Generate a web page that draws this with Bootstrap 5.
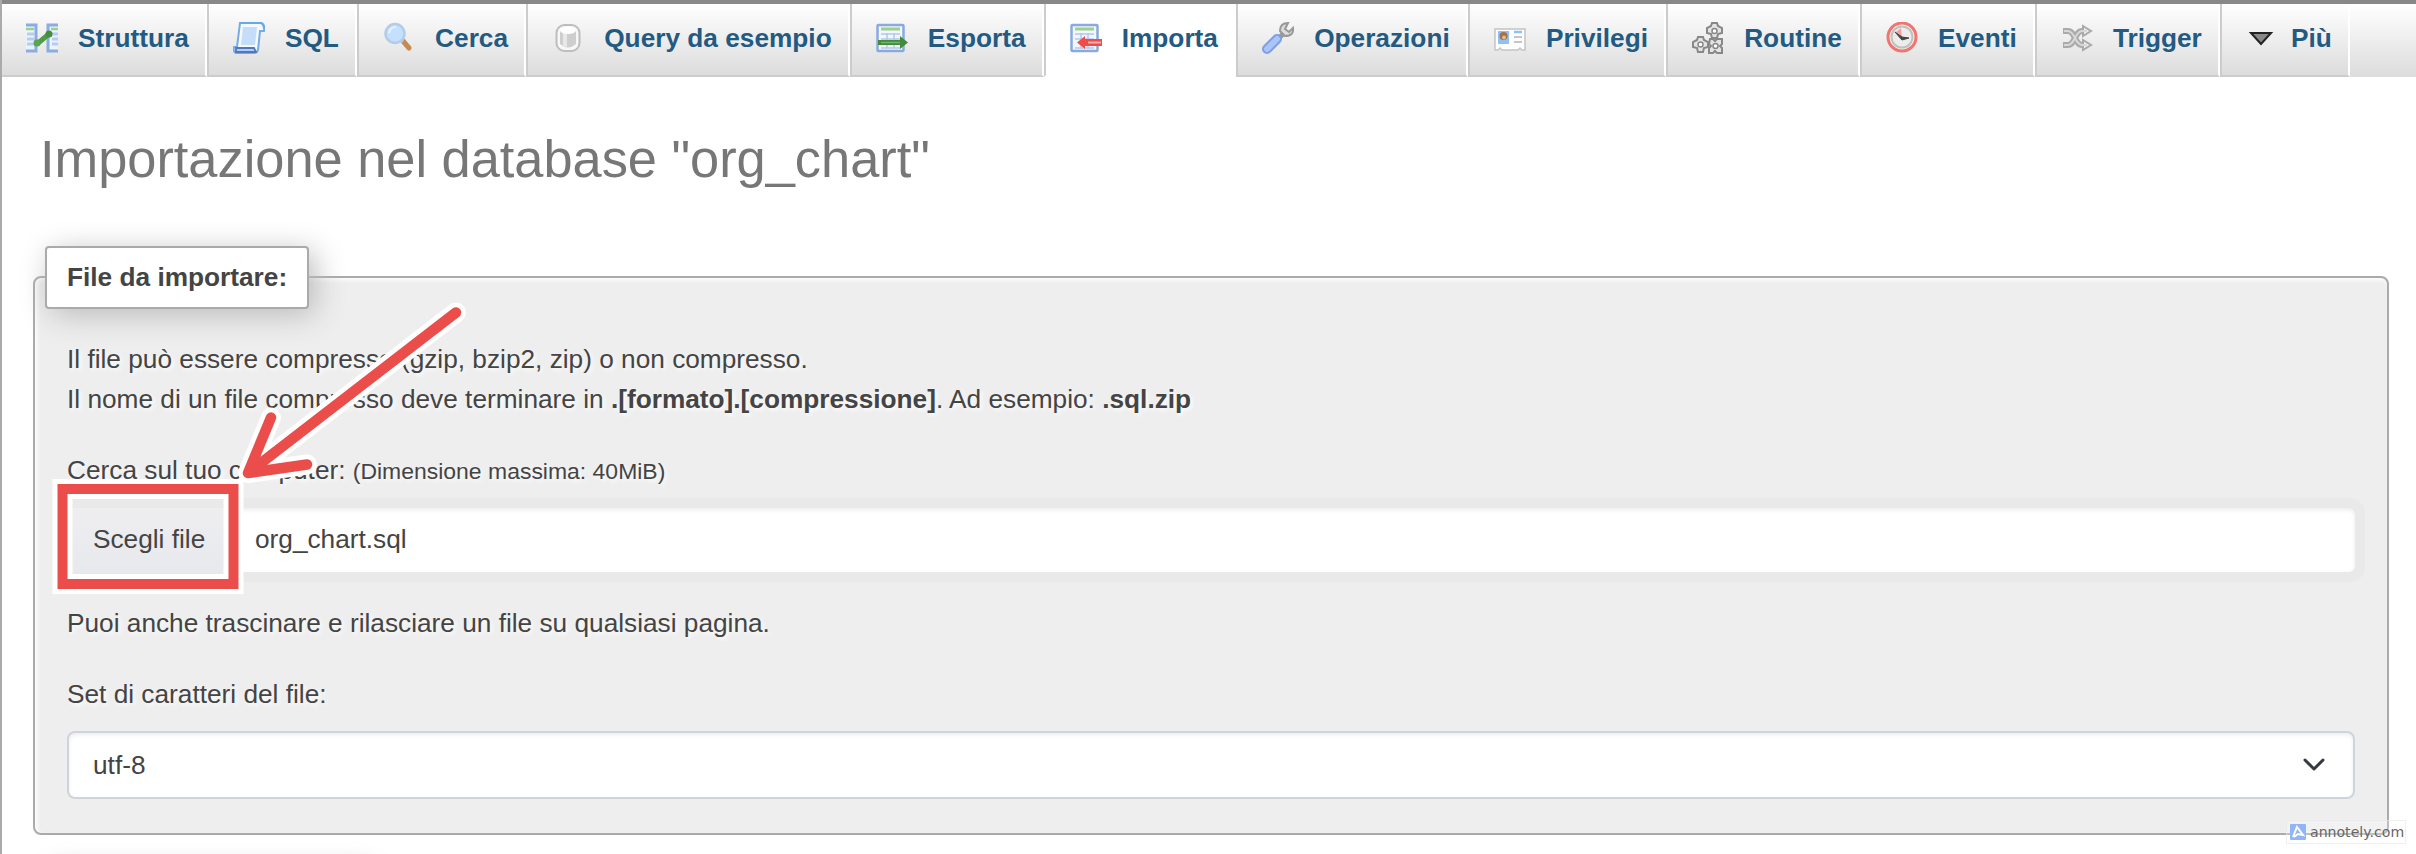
<!DOCTYPE html>
<html lang="it">
<head>
<meta charset="utf-8">
<title>Importa - org_chart</title>
<link href="https://cdn.jsdelivr.net/npm/bootstrap@5.3.0/dist/css/bootstrap.min.css" rel="stylesheet">
<style>
body{font-family:"Liberation Sans",Arial,sans-serif;font-size:26.24px;line-height:39.5px;color:#444;background:#fff}
.page{height:854px;border-left:2px solid #aaa}
.topmenu{margin-left:-2px;border-top:4px solid #888;height:77px;background:linear-gradient(#fff,#dcdcdc);flex-wrap:nowrap}
.topmenu .nav-link{height:73px;display:flex;align-items:center;padding:0 16.2px 3px 24px;border:0 solid;border-width:0 2px 2px;border-color:#ccc #fff #ccc #ccc;border-radius:0;font-weight:700;color:#235a81;white-space:nowrap;line-height:40px;background:linear-gradient(#fff,#dcdcdc)}
.topmenu .nav-item:first-child .nav-link{border-left-color:#aaa}
.topmenu .nav-link.active{background:#fff;border-color:#ccc #fff #fff #ccc}
.topmenu svg{width:32px;height:32px;margin:0 20px 0 0;flex:none}
.topmenu .nav-item:last-child svg{margin:0 14px 0 -1px}
.heading{font-size:52.4px;line-height:64px;color:#777;margin:50px 0 0 38px;font-weight:400;letter-spacing:-.02px}
.panel{margin:85px 27px 0 31px;height:559px;border:2px solid #aaa;border-radius:8px;background:#eee;box-shadow:inset 2px 2px 4px #fff;padding:0 32px;text-shadow:2px 2px 4px #fff}
.panel-legend{width:264px;height:63px;margin:-32px 0 31px -22px;border:2px solid #aaa;border-radius:4px;background:#fff;padding-left:20px;line-height:58px;font-weight:700;box-shadow:6px 6px 30px #bbb}
.filebox{height:64px;background:#fff;border-radius:6px;box-shadow:0 0 0 10px #e9e9e9,inset 0 2px 4px rgba(0,0,0,.08);text-shadow:none;line-height:62px}
.filebtn{width:162px;padding-left:26px;background:linear-gradient(#eeeef0,#e8e9ee);border-radius:6px 0 0 6px}
.filename{padding-left:26px}
.hint{margin:32px 0}
.charset{height:68px;border:2px solid #ced4da;border-radius:8px;background:#fff;padding:0 27px 0 24px;box-shadow:inset 0 2px 4px rgba(0,0,0,.075);text-shadow:none;line-height:40px}
.small-note{font-size:22.96px}
.callout{left:0;top:0;pointer-events:none}
.nextbox{width:318px;height:64px;left:45px;top:867px;box-shadow:6px 6px 30px #bbb}
.mark-credit{left:2286px;top:820px;width:120px;height:24px;background:rgba(255,255,255,.25);border:1px solid rgba(230,230,230,.6);font:14.1px/22px "DejaVu Sans",sans-serif;color:#666;padding-left:3px}
</style>
</head>
<body>
<div class="page position-relative overflow-hidden">
<ul class="nav topmenu">
<li class="nav-item"><a class="nav-link" href="#"><svg viewBox="0 0 32 32"><path d="M0 3h10v26H0M32 3H22v26h10" fill="#edf3fc" stroke="#8aace0" stroke-width="3"/><path d="M0 7h8M25 7h7" stroke="#9bd28b" stroke-width="2.5"/><path d="M1 12h7M1 17h7M1 22h7M26 12h6M26 17h6M26 22h6" stroke="#b5cdf0" stroke-width="3"/><path d="M11 22L23 12" stroke="#4f9c46" stroke-width="5"/><circle cx="11" cy="21" r="3.5" fill="#58a64e"/><circle cx="23" cy="12" r="3.5" fill="#458e3d"/></svg>Struttura</a></li>
<li class="nav-item"><a class="nav-link" href="#"><svg viewBox="0 0 32 32"><path d="M7 1h21q4 1 3 8h-4l-2 19q-1 3-4 3H3q-3-1-2-6h3Z" fill="#f5f9ff" stroke="#75ace7" stroke-width="2"/><path d="M10 5h14l-2 18H8Z" fill="#c4defa"/><path d="M3 26h18l2 4H3Z" fill="#b0cdf5" stroke="#5278b9" stroke-width="1.8"/><path d="M7 1h21q3 1 3 6" fill="none" stroke="#63abe6" stroke-width="2"/></svg>SQL</a></li>
<li class="nav-item"><a class="nav-link" href="#"><svg viewBox="0 0 32 32"><path d="M20 19l6 7" stroke="#c48a52" stroke-width="5" stroke-linecap="round"/><path d="M17 17l3 3" stroke="#bbb" stroke-width="3"/><circle cx="12" cy="11.500" r="9.500" fill="#c5e0fc" stroke="#b4cbea" stroke-width="2.500"/><path d="M6 11q1-6 7-6" fill="none" stroke="#e6f3ff" stroke-width="2"/></svg>Cerca</a></li>
<li class="nav-item"><a class="nav-link" href="#"><svg viewBox="0 0 32 32"><rect x="4.500" y="3" width="23" height="26" rx="8" fill="#f7f7f7" stroke="#bdbdbd" stroke-width="2"/><path d="M8 9v13q8 7 16 0V9Z" fill="#cecece"/><path d="M11 11v13q2 1 4 1V11Z" fill="#e8e8e8"/><ellipse cx="16" cy="8.500" rx="8" ry="3.500" fill="#fff"/></svg>Query da esempio</a></li>
<li class="nav-item"><a class="nav-link" href="#"><svg viewBox="0 0 32 32"><rect x="1.500" y="3" width="26" height="26" rx="1" fill="#f2f6fd" stroke="#89aadd" stroke-width="2.500"/><path d="M5 7h19" stroke="#9bd28b" stroke-width="3"/><path d="M5 12h19M5 17h19M5 26h19M11 11v15M18 11v15" stroke="#b3c9eb" stroke-width="1.500"/><path d="M2 18h22v-4l8 6.500-8 6.500v-4H2Z" fill="#438a3d"/><path d="M5 20.500h19" stroke="#74b56c" stroke-width="1.500"/></svg>Esporta</a></li>
<li class="nav-item"><a class="nav-link active" href="#"><svg viewBox="0 0 32 32"><rect x="1.500" y="3" width="26" height="26" rx="1" fill="#f2f6fd" stroke="#89aadd" stroke-width="2.500"/><path d="M5 7h19" stroke="#9bd28b" stroke-width="3"/><path d="M5 12h19M5 17h19M5 26h19M11 11v15M18 11v15" stroke="#b3c9eb" stroke-width="1.500"/><path d="M32 17H15v-3l-8 6.500 8 6.500v-3h17Z" fill="#f04c4c"/><path d="M18 20.500h13" stroke="#ffaaaa" stroke-width="2"/></svg>Importa</a></li>
<li class="nav-item"><a class="nav-link" href="#"><svg viewBox="0 0 32 32"><path d="M16 17l7-7" stroke="#999" stroke-width="5"/><path d="M26 1q-8 0-8 8l5 5q9 0 8-8l-4 4-4-3Z" fill="#ddd" stroke="#999" stroke-width="2"/><path d="M5 27L15 17" stroke="#7f9fe3" stroke-width="10" stroke-linecap="round"/><path d="M5 27L15 17" stroke="#abc4f8" stroke-width="6" stroke-linecap="round"/></svg>Operazioni</a></li>
<li class="nav-item"><a class="nav-link" href="#"><svg viewBox="0 0 32 32"><path d="M1 7h30v21h-3l-2-2-2 2H8l-2-2-2 2H1Z" fill="#fff" stroke="#c4c4c4" stroke-width="1.500"/><path d="M4 9h11v13H4Z" fill="#8ec2f7"/><circle cx="9.500" cy="14" r="4" fill="#a87045"/><circle cx="10" cy="15.500" r="2" fill="#e7b98f"/><path d="M20 10h8" stroke="#8ec2f7" stroke-width="2.500"/><path d="M20 15h8M20 20h8" stroke="#c5c5c5" stroke-width="2"/></svg>Privilegi</a></li>
<li class="nav-item"><a class="nav-link" href="#"><svg viewBox="0 0 32 32"><g fill="#e4e4e4" stroke="#888" stroke-width="2"><path d="M20 1h5l1 3 4 2v5l-4 1-1 4h-5l-1-4-4-1V6l4-2Z"/><path d="M6 15h5l1 3 4 2v5l-4 1-1 4H6l-1-4-4-1v-5l4-2Z"/><path d="M18 17h3l2 2 2-2h5v5l-2 2 2 2v5h-5l-2-2-2 2h-4v-5l2-2-2-2Z"/></g><g fill="#fff" stroke="#888" stroke-width="1.500"><circle cx="22.500" cy="9" r="2.500"/><circle cx="8.500" cy="22.500" r="2.500"/><circle cx="23.500" cy="24" r="2.500"/></g></svg>Routine</a></li>
<li class="nav-item"><a class="nav-link" href="#"><svg viewBox="0 0 32 32"><circle cx="16" cy="15" r="14" fill="#f7eeee" stroke="#f07571" stroke-width="3"/><circle cx="16" cy="15" r="10.500" fill="#ececeb" stroke="#c0c0bc" stroke-width="2"/><path d="M16 15l-1-9-5 4Z" fill="#f7a2a2"/><path d="M9 10l7 5 7 1-7 2Z" fill="#444" stroke="#444"/></svg>Eventi</a></li>
<li class="nav-item"><a class="nav-link" href="#"><svg viewBox="0 0 32 32"><path d="M2 9h5c7 0 7 14 14 14h3M2 23h5c7 0 7-14 14-14h3" fill="none" stroke="#aaa" stroke-width="6"/><path d="M22 4l8 5-8 5ZM22 18l8 5-8 5Z" fill="#eee" stroke="#aaa" stroke-width="2"/><path d="M3 9h4c7 0 7 14 14 14h5M3 23h4c7 0 7-14 14-14h5" fill="none" stroke="#d8d8d8" stroke-width="2"/></svg>Trigger</a></li>
<li class="nav-item"><a class="nav-link" href="#"><svg viewBox="0 0 32 32"><path d="M6 11h20L16 22Z" fill="#888" stroke="#222" stroke-width="2"/></svg>Più</a></li>
</ul>
<h2 class="heading">Importazione nel database "org_chart"</h2>
<section class="panel">
<div class="panel-legend">File da importare:</div>
<div>Il file può essere compresso (gzip, bzip2, zip) o non compresso.<br>Il nome di un file compresso deve terminare in <b>.[formato].[compressione]</b>. Ad esempio: <b>.sql.zip</b></div>
<label class="d-block mt-4 pt-2">Cerca sul tuo computer: <span class="small-note">(Dimensione massima: 40MiB)</span></label>
<div class="filebox d-flex mt-3"><span class="filebtn">Scegli file</span><span class="filename">org_chart.sql</span></div>
<p class="hint">Puoi anche trascinare e rilasciare un file su qualsiasi pagina.</p>
<label class="d-block">Set di caratteri del file:</label>
<div class="charset d-flex align-items-center justify-content-between mt-3"><span>utf-8</span><svg width="24" height="16" viewBox="0 0 24 16"><path d="M3 3l9 9 9-9" fill="none" stroke="#343a40" stroke-width="3" stroke-linecap="round" stroke-linejoin="round"/></svg></div>
</section>
<div class="nextbox position-absolute"></div>
</div>
<svg class="callout position-absolute" width="480" height="610" viewBox="0 0 480 610"><g fill="none" stroke-linecap="round" stroke-linejoin="round"><path d="M456 312.500L248 473M271 417.500L248 473L307 464.500" stroke="#fff" stroke-width="20"/><rect x="62.500" y="489" width="171" height="95" stroke="#fff" stroke-width="20" stroke-linejoin="miter"/><rect x="62.500" y="489" width="171" height="95" stroke="#eb4d4b" stroke-width="10" stroke-linejoin="miter"/><path d="M456 312.500L248 473M271 417.500L248 473L307 464.500" stroke="#eb4d4b" stroke-width="10.500"/></g></svg>
<div class="mark-credit position-absolute d-flex align-items-center"><svg class="me-1 flex-shrink-0" width="16" height="16" viewBox="0 0 16 16"><rect width="16" height="16" rx="1" fill="#91b5f8"/><path d="M3 13L7 3l6 8-5-1-4 3" fill="none" stroke="#fff" stroke-width="2"/></svg>annotely.com</div>
<script src="https://cdn.jsdelivr.net/npm/bootstrap@5.3.0/dist/js/bootstrap.bundle.min.js"></script>
</body>
</html>
